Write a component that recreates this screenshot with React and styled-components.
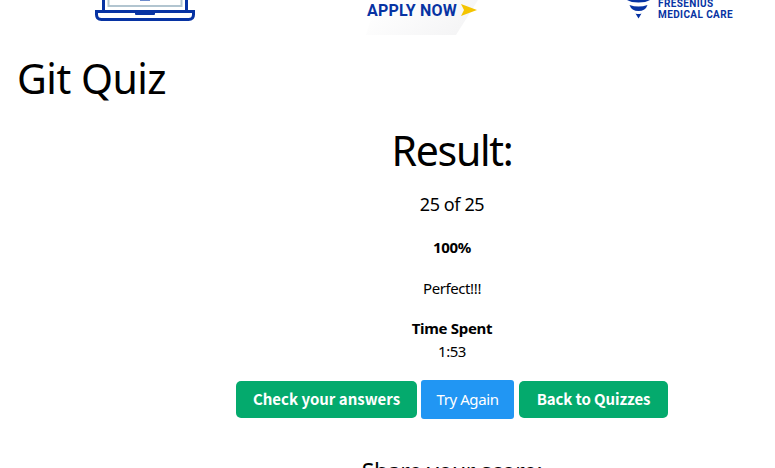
import React from "react";
import styled, { createGlobalStyle } from "styled-components";

const GlobalStyle = createGlobalStyle`
  * { box-sizing: border-box; }
  body { margin: 0; background: #fff; color: #000; font-family: "Noto Sans", "Open Sans", sans-serif; }
`;

const Page = styled.div`
  height: 468px;
  overflow: hidden;
`;

const Banner = styled.header`
  display: flex;
  height: 36px;
  padding-left: 94px;
  overflow: hidden;
`;

const Laptop = styled.svg`
  flex: none;
  width: 102px;
  height: 24px;
`;

const Apply = styled.div`
  position: relative;
  display: flex;
  flex: none;
  gap: 3px;
  width: 130px;
  height: 36px;
  margin-left: 169px;
  padding-left: 2px;
  color: #0733a3;
  font: 700 16px/21px Roboto, sans-serif;
  letter-spacing: 0.2px;
  white-space: nowrap;
`;

const Shade = styled.svg`
  position: absolute;
  left: 0;
  top: 0;
  z-index: -1;
`;

const ApplyText = styled.span`
  width: 91px;
`;

const Arrow = styled.svg`
  flex: none;
  width: 17px;
  height: 20px;
`;

const Brand = styled.div`
  display: flex;
  flex: none;
  gap: 7px;
  margin-left: 131px;
`;

const BrandMark = styled.svg`
  width: 25px;
  height: 20px;
`;

const BrandName = styled.div`
  margin-top: -2px;
  color: #0733a3;
  font: 700 10px/11px Roboto, sans-serif;
  letter-spacing: 0.4px;
  white-space: nowrap;
`;

const BrandLine = styled.div``;

const Title = styled.h1`
  margin: 12px 0 0 17px;
  font-size: 41px;
  font-weight: 400;
  line-height: 60px;
  letter-spacing: ${(p) => p.$spacing || 0};
`;

const Result = styled.main`
  display: flex;
  flex-direction: column;
  align-items: center;
  width: 904px;
  margin-top: 12px;
  text-align: center;
`;

const ResultTitle = styled(Title)`
  margin: 0;
`;

const Line = styled.p`
  margin: ${(p) => p.$top} 0 0;
  font-size: ${(p) => p.$size || "15px"};
  font-weight: ${(p) => p.$weight || 400};
  line-height: ${(p) => p.$height || "23px"};
  letter-spacing: ${(p) => p.$spacing || 0};
  white-space: nowrap;
`;

const Actions = styled.div`
  display: flex;
  align-items: center;
  margin-top: 17px;
`;

const Button = styled.button`
  width: ${(p) => p.$width};
  height: 37px;
  padding: 0 0 2px;
  border: 0;
  border-radius: 5px;
  background: #04aa6d;
  color: #fff;
  font: 700 15px/35px "Noto Sans CJK SC", sans-serif;
  letter-spacing: ${(p) => p.$spacing || 0};
  white-space: nowrap;
`;

const RetryButton = styled(Button)`
  height: 39px;
  margin: 0 5px 0 4px;
  padding: 0;
  border-radius: 3px;
  background: #2196f3;
  font: 400 15px/39px "Noto Sans", sans-serif;
`;

export default function App() {
  return (
    <Page>
      <GlobalStyle />
      <Banner>
        <Laptop viewBox="0 0 102 24">
          <path d="M9.5 0v11M92.5 0v11" stroke="#0733a3" strokeWidth="3" />
          <path d="M14.5 0v6h73V0" fill="none" stroke="#b2c5d0" strokeWidth="2" />
          <path d="M46 0h10v1H46z" fill="#6c8acc" />
          <path d="M2.5 11.5h97v3q0 5-5 5h-87q-5 0-5-5z" fill="#fff" stroke="#0733a3" strokeWidth="3" />
          <path d="M41 12h20v2q0 1-1 1H42q-1 0-1-1z" fill="#0733a3" />
        </Laptop>
        <Apply>
          <Shade width="130" height="36" viewBox="0 0 130 36">
            <defs>
              <linearGradient id="shade" x1="0" y1="0" x2="1" y2="0.4">
                <stop offset="0.1" stopColor="#fff" />
                <stop offset="1" stopColor="#f5f5f6" />
              </linearGradient>
            </defs>
            <path d="M12 0H113L91 35H1z" fill="url(#shade)" />
          </Shade>
          <ApplyText>APPLY NOW</ApplyText>
          <Arrow viewBox="0 0 17 20">
            <path d="M0 4l16 6-16 6 3-6z" fill="#f4c400" />
          </Arrow>
        </Apply>
        <Brand>
          <BrandMark viewBox="0 0 25 20">
            <path d="M1 0h23q-4 2.500-11.500 2.500T1 0zM3.500 5q9 3 18 0-2 6-9 6t-9-6zM9.500 13.500q3 1 6 0l-3 5z" fill="#0733a3" />
          </BrandMark>
          <BrandName>
            <BrandLine>FRESENIUS</BrandLine>
            <BrandLine>MEDICAL CARE</BrandLine>
          </BrandName>
        </Brand>
      </Banner>
      <Title $spacing="-0.5px">Git Quiz</Title>
      <Result>
        <ResultTitle $spacing="-1.3px">Result:</ResultTitle>
        <Line $top="10px" $size="18px" $height="28px" $spacing="-0.4px">25 of 25</Line>
        <Line $top="18px" $weight="700" $spacing="-0.3px">100%</Line>
        <Line $top="18px" $spacing="-0.4px">Perfect!!!</Line>
        <Line $top="17px" $weight="700" $spacing="-0.3px">Time Spent</Line>
        <Line $top="0" $spacing="-0.5px">1:53</Line>
        <Actions>
          <Button $width="181px">Check your answers</Button>
          <RetryButton $width="93px" $spacing="-0.4px">Try Again</RetryButton>
          <Button $width="149px" $spacing="-0.1px">Back to Quizzes</Button>
        </Actions>
        <Line $top="35px" $size="23px" $height="34px" $spacing="-0.4px">Share your score:</Line>
      </Result>
    </Page>
  );
}
